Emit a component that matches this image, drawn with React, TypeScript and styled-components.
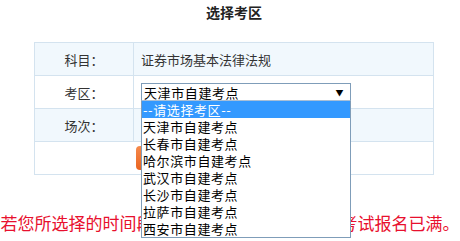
import * as React from 'react';
import styled, { createGlobalStyle } from 'styled-components';

const GlobalStyle = createGlobalStyle`
  html, body {
    margin: 0;
    padding: 0;
    background: #ffffff;
  }
  body {
    font-family: "Noto Sans CJK SC", "Noto Sans", sans-serif;
    color: #333333;
  }
`;

const Page = styled.div`
  width: 460px;
  height: 241px;
  overflow: hidden;
`;

const Title = styled.h3`
  margin: 0;
  padding: 2px 0 0 34px;
  width: 400px;
  height: 40px;
  line-height: 20px;
  font-size: 14px;
  font-weight: bold;
  text-align: center;
  color: #222222;
`;

const FormTable = styled.table`
  margin-left: 34px;
  width: 400px;
  border-collapse: collapse;
  font-size: 13px;
`;

const Row = styled.tr<{ $alt?: boolean }>`
  background: ${({ $alt }) => ($alt ? '#f1f8fd' : '#ffffff')};
`;

const Label = styled.td`
  width: 98px;
  height: 32px;
  padding: 0;
  border: 1px solid #d4e3ef;
  text-align: center;
  color: #333333;
`;

const Value = styled.td`
  height: 32px;
  padding: 0 0 0 7px;
  border: 1px solid #d4e3ef;
  color: #333333;
`;

const ButtonCell = styled.td`
  height: 32px;
  padding: 0;
  border: 1px solid #d4e3ef;
`;

const ButtonBar = styled.div`
  display: flex;
  gap: 14px;
  padding-left: 101px;
`;

const Button = styled.button`
  width: 92px;
  height: 24px;
  border: 0;
  border-radius: 4px;
  background: linear-gradient(to bottom, #f68a4c, #ea6420);
  color: #ffffff;
  font-family: inherit;
  font-size: 13px;
`;

const SelectWrap = styled.div`
  position: relative;
  width: 210px;
`;

const SelectBox = styled.div`
  display: flex;
  align-items: center;
  justify-content: space-between;
  box-sizing: border-box;
  height: 18px;
  padding: 0 6px 0 2px;
  border: 1px solid #7f9db9;
  border-bottom-color: #a9bfd6;
  background: #ffffff;
  font-size: 13px;
  letter-spacing: 0.6px;
  color: #000000;
`;

const Arrow = styled.span`
  font-size: 8px;
  color: #000000;
`;

const OptionList = styled.ul`
  position: absolute;
  top: 18px;
  left: 0;
  z-index: 2;
  box-sizing: border-box;
  width: 210px;
  margin: 0;
  padding: 0;
  list-style: none;
  border: 1px solid #7f9db9;
  border-top: 0;
  background: #ffffff;
`;

const Option = styled.li<{ $active?: boolean }>`
  height: 17px;
  line-height: 17px;
  padding-left: 1px;
  font-size: 13px;
  letter-spacing: 0.6px;
  white-space: nowrap;
  background: ${({ $active }) => ($active ? '#3399ff' : '#ffffff')};
  color: ${({ $active }) => ($active ? '#ffffff' : '#000000')};
`;

const Notice = styled.p`
  margin: 38px 0 0;
  width: 460px;
  line-height: 20px;
  font-size: 17px;
  white-space: nowrap;
  text-align: center;
  color: #e8102e;
`;

const sites = [
  '天津市自建考点',
  '长春市自建考点',
  '哈尔滨市自建考点',
  '武汉市自建考点',
  '长沙市自建考点',
  '拉萨市自建考点',
  '西安市自建考点',
];

export default function App() {
  return (
    <Page>
      <GlobalStyle />
      <Title>选择考区</Title>
      <FormTable>
        <tbody>
          <Row $alt>
            <Label>科目：</Label>
            <Value>证券市场基本法律法规</Value>
          </Row>
          <Row>
            <Label>考区：</Label>
            <Value>
              <SelectWrap>
                <SelectBox>
                  <span>天津市自建考点</span>
                  <Arrow>▼</Arrow>
                </SelectBox>
                <OptionList>
                  <Option $active>--请选择考区--</Option>
                  {sites.map((s) => (
                    <Option key={s}>{s}</Option>
                  ))}
                </OptionList>
              </SelectWrap>
            </Value>
          </Row>
          <Row $alt>
            <Label>场次：</Label>
            <Value />
          </Row>
          <Row>
            <ButtonCell colSpan={2}>
              <ButtonBar>
                <Button>确 定</Button>
                <Button>返 回</Button>
              </ButtonBar>
            </ButtonCell>
          </Row>
        </tbody>
      </FormTable>
      <Notice>若您所选择的时间段内座位已被选完，说明该考试报名已满。</Notice>
    </Page>
  );
}
